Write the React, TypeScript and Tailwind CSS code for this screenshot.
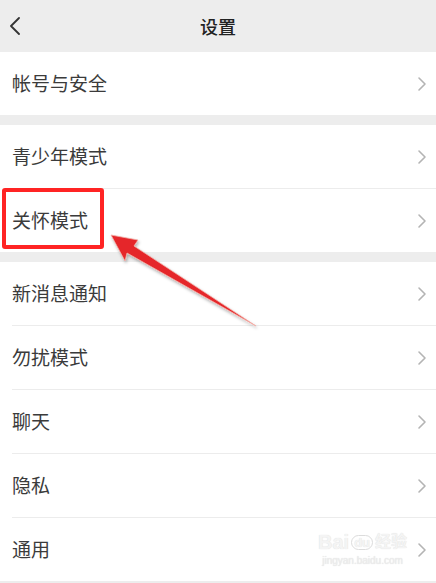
import React from 'react';

const font = { fontFamily: '"Noto Sans CJK SC", "Noto Sans", sans-serif' };

function Chevron() {
  return (
    <svg width="10" height="16" viewBox="0 0 10 16" className="shrink-0">
      <path d="M2 2 L8 8 L2 14" fill="none" stroke="#b4b4b4" strokeWidth="1.6" strokeLinecap="round" strokeLinejoin="round" />
    </svg>
  );
}

function Row({ label, last, highlight }: { label: string; last?: boolean; highlight?: boolean }) {
  return (
    <div className="relative">
      <div className="flex h-[63px] items-center justify-between pl-[12px] pr-[9px]">
        <span className="text-[19px] text-[#3b3b3b]">{label}</span>
        <Chevron />
      </div>
      {!last && <div className="ml-[12px] h-px bg-[#ececec]" />}
      {highlight && (
        <div className="absolute left-[2px] top-[-1px] h-[61px] w-[102px] rounded-[3px] border-[4px] border-[#ff2424]" />
      )}
    </div>
  );
}

function Section({ items, highlightIdx }: { items: string[]; highlightIdx?: number }) {
  return (
    <div className="bg-white">
      {items.map((t, i) => (
        <Row key={t} label={t} last={i === items.length - 1} highlight={i === highlightIdx} />
      ))}
    </div>
  );
}

export default function App() {
  return (
    <div className="relative h-[583px] w-[436px] overflow-hidden bg-[#ededed]" style={font}>
      {/* header */}
      <div className="relative flex h-[52px] items-center justify-center">
        <svg width="12" height="18" viewBox="0 0 12 18" className="absolute left-[9px] top-[17px]">
          <path d="M10 1 L2 9 L10 17" fill="none" stroke="#333" strokeWidth="1.8" strokeLinecap="round" strokeLinejoin="round" />
        </svg>
        <span className="text-[18px] font-medium text-[#222]">设置</span>
      </div>

      <div className="flex flex-col gap-[10px]">
        <Section items={['帐号与安全']} />
        <Section items={['青少年模式', '关怀模式']} highlightIdx={1} />
        <Section items={['新消息通知', '勿扰模式', '聊天', '隐私', '通用']} />
      </div>

      {/* baidu watermark */}
      <div className="pointer-events-none absolute left-[318px] top-[532px] flex flex-col items-center leading-none">
        <div className="flex items-center gap-[2px] text-[20px] font-bold text-[#f4f4f4] [text-shadow:0_0_1px_#d8d8d8]" style={{ fontFamily: '"Liberation Sans", "Noto Sans CJK SC", sans-serif' }}>
          <span>Bai</span>
          <span className="rounded-full border border-[#dcdcdc] px-[2px] text-[13px]">du</span>
          <span className="text-[16px]">经验</span>
        </div>
        <span className="mt-[4px] text-[10px] text-[#eeeeee] [text-shadow:0_0_1px_#d6d6d6]" style={{ fontFamily: '"Liberation Sans", sans-serif' }}>
          jingyan.baidu.com
        </span>
      </div>

      {/* arrow */}
      <svg className="pointer-events-none absolute left-0 top-0" width="436" height="583">
        <defs>
          <filter id="sh" x="-20%" y="-20%" width="140%" height="140%">
            <feDropShadow dx="1" dy="2" stdDeviation="1.5" floodColor="#000" floodOpacity="0.3" />
          </filter>
        </defs>
        <path
          d="M111 235 L138 240 L134 246 L256 326 L127 253 L125 261 Z"
          fill="#e5272b"
          stroke="#f3b0a8"
          strokeWidth="0.8"
          strokeLinejoin="round"
          filter="url(#sh)"
        />
      </svg>
    </div>
  );
}
